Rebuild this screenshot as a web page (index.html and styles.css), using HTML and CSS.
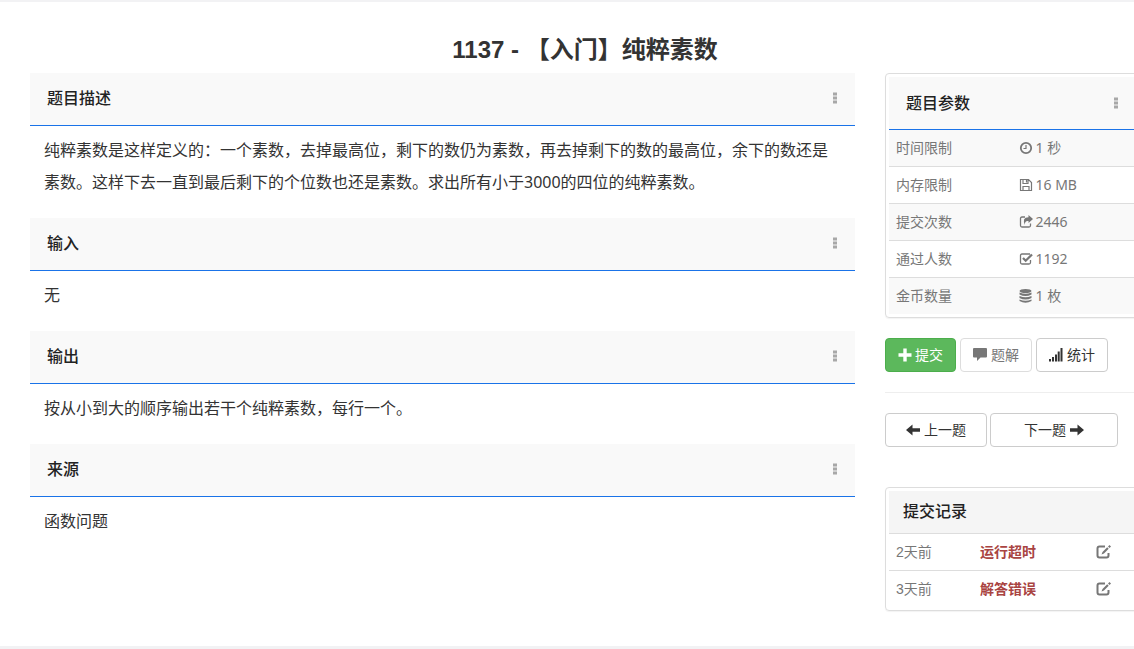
FILE: index.html
```html
<!DOCTYPE html>
<html lang="zh-CN">
<head>
<meta charset="utf-8">
<meta name="viewport" content="width=device-width, initial-scale=1">
<title>1137 - 【入门】纯粹素数</title>
<link rel="stylesheet" href="styles.css">
</head>
<body>
<svg class="sprite" aria-hidden="true">
  <symbol id="dots" viewBox="0 0 4 12"><path d="M0 0.500h4v3H0zM0 4.500h4v3H0zM0 8.500h4v3H0z"/></symbol>
  <symbol id="edit" viewBox="0 0 15 14"><path d="M9 1.500H3.500Q1.500 1.500 1.500 3.500v7q0 2 2 2h7q2 0 2-2V8" fill="none" stroke="currentColor" stroke-width="2"/><path d="M5.500 9.500L6.500 7l4.700-4.700 1.500 1.500L8 8.500zM12 1.500L13.500 0 15 1.500 13.500 3z"/></symbol>
</svg>
<div class="page">
  <h1 class="title">1137 - 【入门】纯粹素数</h1>
  <div class="columns">
    <main class="problem">
      <section class="section">
        <header class="section-head"><h2>题目描述</h2><button class="more" aria-label="更多"><svg><use href="#dots"/></svg></button></header>
        <p>纯粹素数是这样定义的：一个素数，去掉最高位，剩下的数仍为素数，再去掉剩下的数的最高位，余下的数还是素数。这样下去一直到最后剩下的个位数也还是素数。求出所有小于3000的四位的纯粹素数。</p>
      </section>
      <section class="section">
        <header class="section-head"><h2>输入</h2><button class="more" aria-label="更多"><svg><use href="#dots"/></svg></button></header>
        <p>无</p>
      </section>
      <section class="section">
        <header class="section-head"><h2>输出</h2><button class="more" aria-label="更多"><svg><use href="#dots"/></svg></button></header>
        <p>按从小到大的顺序输出若干个纯粹素数，每行一个。</p>
      </section>
      <section class="section">
        <header class="section-head"><h2>来源</h2><button class="more" aria-label="更多"><svg><use href="#dots"/></svg></button></header>
        <p>函数问题</p>
      </section>
    </main>
    <aside class="side">
      <section class="card">
        <header class="section-head"><h2>题目参数</h2><button class="more" aria-label="更多"><svg><use href="#dots"/></svg></button></header>
        <table class="params">
          <tr><th scope="row">时间限制</th><td><svg class="icon" viewBox="0 0 14 14"><circle cx="7" cy="7" r="5.200" fill="none" stroke="currentColor" stroke-width="1.800"/><path d="M7 4v3.500H4.500" fill="none" stroke="currentColor" stroke-width="1.200"/></svg>1 秒</td></tr>
          <tr><th scope="row">内存限制</th><td><svg class="icon" viewBox="0 0 14 14"><path d="M1.500 1.500h8l3 3v8h-11zM4 12.500V8.500h6v4M4 1.500v4h5v-4M7.500 2v2.500" fill="none" stroke="currentColor" stroke-width="1.200"/></svg>16 MB</td></tr>
          <tr><th scope="row">提交次数</th><td><svg class="icon" viewBox="0 0 14 14"><path d="M6 2H3Q1.500 2 1.500 3.500v7Q1.500 12 3 12h7q1.500 0 1.500-1.500V8.500" fill="none" stroke="currentColor" stroke-width="1.300"/><path d="M9.500 0l4.500 4L9.500 8V6Q5.500 5.500 6 10 2.500 2.500 9.500 2.300z"/></svg>2446</td></tr>
          <tr><th scope="row">通过人数</th><td><svg class="icon" viewBox="0 0 14 14"><path d="M11 2H3Q1.500 2 1.500 3.500v7Q1.500 12 3 12h7q1.500 0 1.500-1.500V8" fill="none" stroke="currentColor" stroke-width="1.300"/><path d="M4 6l2.700 2.700L13 2.500" fill="none" stroke="currentColor" stroke-width="2.300"/></svg>1192</td></tr>
          <tr><th scope="row">金币数量</th><td><svg class="icon" viewBox="0 0 14 14"><ellipse cx="6.500" cy="2" rx="6" ry="2"/><path d="M.5 3.500q6 2.500 12 0v2q-6 3-12 0zM.5 7q6 2.500 12 0v2q-6 3-12 0zM.5 10.500q6 2.500 12 0v1.500q-6 3.500-12 0z"/></svg>1 枚</td></tr>
        </table>
      </section>
      <div class="buttons">
        <button class="btn primary"><svg class="icon" viewBox="0 0 14 14"><path d="M5.300.5h3.400v4.800h4.800v3.400H8.700v4.800H5.300V8.700H.5V5.300h4.800z"/></svg>提交</button>
        <button class="btn muted" disabled><svg class="icon" viewBox="0 0 14 14"><path d="M1 0h12q1 0 1 1v7.500q0 1-1 1H7.500L4 13V9.500H1q-1 0-1-1V1q0-1 1-1z"/></svg>题解</button>
        <button class="btn"><svg class="icon" viewBox="0 0 14 14"><path d="M0 11h2v2.500H0zM3 9h2v4.500H3zM6 6.500h2v7H6zM8.700 3.500h2v10h-2zM11.500 0h2v13.500h-2z"/></svg>统计</button>
      </div>
      <hr>
      <nav class="pager">
        <a class="btn prev" href="#prev"><svg class="icon" viewBox="0 0 14 14"><path d="M0 7l6.500-5.500v3.800H14v3.400H6.500v3.800z"/></svg>上一题</a>
        <a class="btn next" href="#next">下一题<svg class="icon" viewBox="0 0 14 14"><path d="M14 7L7.500 1.500v3.800H0v3.400h7.500v3.800z"/></svg></a>
      </nav>
      <section class="card records">
        <h2 class="records-head">提交记录</h2>
        <table>
          <colgroup><col class="when"><col class="result"><col></colgroup>
          <tr><td>2天前</td><td><a class="status" href="#r2">运行超时</a></td><td><a class="edit" href="#e2" aria-label="编辑"><svg class="icon"><use href="#edit"/></svg></a></td></tr>
          <tr><td>3天前</td><td><a class="status" href="#r3">解答错误</a></td><td><a class="edit" href="#e3" aria-label="编辑"><svg class="icon"><use href="#edit"/></svg></a></td></tr>
        </table>
      </section>
    </aside>
  </div>
</div>
</body>
</html>
```
FILE: styles.css
```css
* { box-sizing: border-box; }
body {
  margin: 0;
  overflow-x: hidden;
  background: #f2f2f4;
  color: #333;
  font: 14px/20px "Noto Sans", "Noto Sans CJK SC", sans-serif;
}
h1, h2, p { margin: 0; }
svg { fill: currentColor; }
.sprite { display: none; }
.page {
  width: calc(100% + 36px);
  margin-top: 2px;
  padding: 34px 30px 35px;
  background: #fff;
}
.title {
  padding-bottom: 9px;
  text-align: center;
  font: bold 24px/28px "Liberation Sans", "Noto Sans CJK SC", sans-serif;
}
.columns {
  display: grid;
  grid-template-columns: minmax(0, 1fr) 255px;
  gap: 30px;
}
.section-head {
  display: flex;
  align-items: center;
  justify-content: space-between;
  height: 53px;
  padding: 0 17px 2px;
  background: #f9f9f9;
  border-bottom: 1px solid #1a73e8;
}
.section-head h2, .records-head {
  font-size: 16px;
  line-height: 24px;
  font-weight: 500;
  color: #222;
}
.more {
  display: flex;
  padding: 0;
  border: 0;
  background: none;
  color: #a8a8a8;
}
.more svg { width: 6px; height: 12px; }
.section p {
  padding: 8px 14px 20px;
  font-size: 16px;
  line-height: 32px;
}
.card {
  padding: 3px;
  border: 1px solid #ddd;
  border-radius: 4px;
  box-shadow: 0 1px 1px rgba(0, 0, 0, .05);
}
.card .section-head { padding-bottom: 0; }
table {
  width: 100%;
  table-layout: fixed;
  border-spacing: 0;
  color: #777;
}
th, td {
  height: 37px;
  padding: 0 7px;
  text-align: left;
  font-weight: 400;
  border-top: 1px solid #ddd;
}
.params tr:first-child > * { height: 36px; border-top: 0; }
.params tr:nth-child(odd) { background: #f9f9f9; }
.params td { padding-left: 6px; }
.icon {
  width: 14px;
  height: 14px;
  margin-right: 3px;
  vertical-align: -2px;
  overflow: visible;
}
.buttons, .pager { display: flex; gap: 4px; }
.buttons { margin-top: 20px; }
.btn {
  display: inline-flex;
  align-items: center;
  justify-content: center;
  height: 34px;
  padding: 0 12px;
  border: 1px solid #ccc;
  border-radius: 4px;
  background: #fff;
  color: #333;
  font: inherit;
  text-decoration: none;
  white-space: nowrap;
}
.btn .icon { margin-right: 4px; }
.primary { background: #5cb85c; border-color: #4cae4c; color: #fff; }
.primary .icon { margin-right: 3px; }
.muted { border-color: #ddd; color: #777; }
hr {
  margin: 20px 0;
  border: 0;
  border-top: 1px solid #eee;
}
.pager { gap: 3px; }
.prev { padding: 0 20px; }
.next { padding: 0 33px; }
.pager .next .icon { margin: 0 0 0 4px; }
.records { margin-top: 40px; }
.records-head {
  padding: 8px 14px 10px;
  background: #f5f5f5;
}
.when { width: 34%; }
.result { width: 47%; }
.records td {
  font-family: "Liberation Sans", "Noto Sans CJK SC", sans-serif;
}
.status { color: #a94442; font-weight: 700; text-decoration: none; }
.edit { color: #777; }
.edit .icon { width: 15px; }
```
